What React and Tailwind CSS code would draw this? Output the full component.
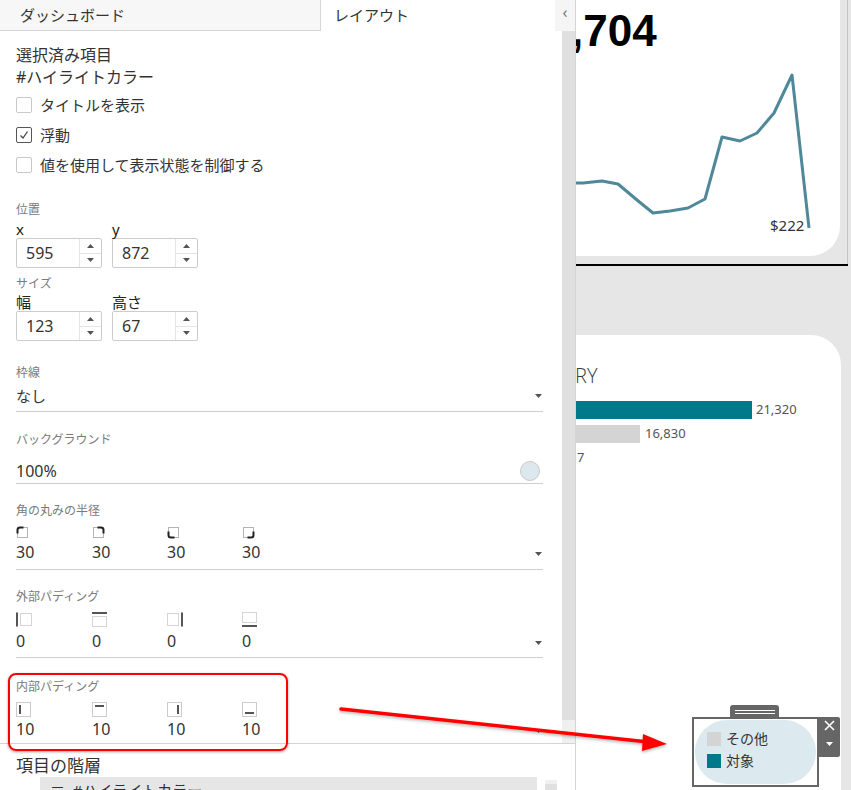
import React from "react";

const pts = [
  [-1, 123], [7, 123], [26, 121], [42, 124], [61, 140], [77, 153], [94, 151],
  [112, 148], [129, 139], [146, 77], [164, 81], [181, 73], [198, 53], [216, 15], [233, 168],
];

function Tri({ up, color = "#555" }) {
  return (
    <svg width="7" height="4" viewBox="0 0 7 4">
      <path d={up ? "M0 4 L3.5 0 L7 4 Z" : "M0 0 L7 0 L3.5 4 Z"} fill={color} />
    </svg>
  );
}

function Check({ checked, label }) {
  return (
    <div className="flex h-[30px] items-center">
      <span
        className={`flex h-4 w-4 items-center justify-center rounded-[2px] border ${
          checked ? "border-[#555]" : "border-[#c8c8c8]"
        }`}
      >
        {checked && (
          <svg width="10" height="10" viewBox="0 0 10 10">
            <path d="M1.5 5.5 L4 8 L8.5 1.5" fill="none" stroke="#444" strokeWidth="1.3" />
          </svg>
        )}
      </span>
      <span className="ml-[8px] text-[15px] text-[#333]">{label}</span>
    </div>
  );
}

function Spin({ label, value }) {
  return (
    <div>
      <div className="text-[15px] leading-[18px] text-[#222]">{label}</div>
      <div className="flex h-[30px] w-[86px] rounded-[2px] border border-[#ccc] bg-white">
        <div className="flex flex-1 items-center pl-[9px] text-[16px] text-[#333]">{value}</div>
        <div className="flex w-[22px] flex-col border-l border-[#e4e4e4]">
          <div className="flex flex-1 items-center justify-center border-b border-[#e4e4e4]">
            <Tri up />
          </div>
          <div className="flex flex-1 items-center justify-center">
            <Tri />
          </div>
        </div>
      </div>
    </div>
  );
}

function Corner({ rot }) {
  return (
    <svg width="13" height="13" viewBox="0 0 13 13">
      <rect x="1.5" y="1.5" width="10" height="10" fill="none" stroke="#666" strokeDasharray="1 1" />
      <path
        d="M1.5 7.5 V4 Q1.5 1.5 4 1.5 H7.5"
        fill="none"
        stroke="#222"
        strokeWidth="2"
        transform={`rotate(${rot} 6.5 6.5)`}
      />
    </svg>
  );
}

function OuterPad({ side }) {
  return (
    <svg width="17" height="15" viewBox="0 0 17 15">
      {side === "l" && (
        <>
          <rect x="0" y="0.5" width="2" height="14" fill="#555" />
          <rect x="4.5" y="1.5" width="11" height="12" fill="none" stroke="#aaa" strokeDasharray="1 1" />
        </>
      )}
      {side === "t" && (
        <>
          <rect x="0" y="0" width="15" height="2" fill="#555" />
          <rect x="0.5" y="4.5" width="14" height="10" fill="none" stroke="#aaa" strokeDasharray="1 1" />
        </>
      )}
      {side === "r" && (
        <>
          <rect x="0.5" y="1.5" width="11" height="12" fill="none" stroke="#aaa" strokeDasharray="1 1" />
          <rect x="14" y="0.5" width="2" height="14" fill="#555" />
        </>
      )}
      {side === "b" && (
        <>
          <rect x="0.5" y="0.5" width="14" height="10" fill="none" stroke="#aaa" strokeDasharray="1 1" />
          <rect x="0" y="13" width="15" height="2" fill="#555" />
        </>
      )}
    </svg>
  );
}

function InnerPad({ side }) {
  return (
    <svg width="15" height="15" viewBox="0 0 15 15">
      <rect x="0.5" y="0.5" width="14" height="14" fill="none" stroke="#999" strokeDasharray="1 1" />
      {side === "l" && <rect x="3" y="3" width="2" height="9" fill="#555" />}
      {side === "t" && <rect x="3" y="3" width="9" height="2" fill="#555" />}
      {side === "r" && <rect x="10" y="3" width="2" height="9" fill="#555" />}
      {side === "b" && <rect x="3" y="10" width="9" height="2" fill="#555" />}
    </svg>
  );
}

function Label({ children, className = "" }) {
  return <div className={`text-[12px] leading-[16px] text-[#7a7a7a] ${className}`}>{children}</div>;
}

export default function App() {
  const cols = ["w-[76px]", "w-[75px]", "w-[75px]", "w-[75px]"];
  return (
    <div className="relative flex h-[790px] w-[851px] overflow-hidden bg-white font-['Noto_Sans','Noto_Sans_CJK_JP',sans-serif]">
      {/* left panel */}
      <aside className="flex w-[576px] shrink-0 flex-col border-r border-[#d4d4d4] bg-white">
        <div className="flex h-[31px] shrink-0">
          <div className="flex w-[321px] items-center border-b border-r border-[#d6d6d6] bg-[#f7f7f7] pl-[20px] text-[15px] text-[#333]">
            ダッシュボード
          </div>
          <div className="flex w-[234px] items-center pl-[13px] text-[15px] text-[#333]">レイアウト</div>
          <div className="flex w-[20px] items-start justify-center bg-[#f5f5f5] pt-[3px] text-[16px] leading-[18px] text-[#777]">
            ‹
          </div>
        </div>

        <div className="flex h-[712px] shrink-0">
          <div className="flex-1 overflow-hidden pl-[16px] pr-[19px] pt-[13px]">
            <div className="text-[16px] leading-[22px] text-[#333]">選択済み項目</div>
            <div className="text-[16px] leading-[22px] text-[#333]">#ハイライトカラー</div>
            <div className="mt-[2px]">
              <Check label="タイトルを表示" />
              <Check checked label="浮動" />
              <Check label="値を使用して表示状態を制御する" />
            </div>

            <Label className="mt-[22px]">位置</Label>
            <div className="mt-[2px] flex gap-[10px]">
              <Spin label="x" value="595" />
              <Spin label="y" value="872" />
            </div>
            <Label className="mt-[8px]">サイズ</Label>
            <div className="mt-[1px] flex gap-[10px]">
              <Spin label="幅" value="123" />
              <Spin label="高さ" value="67" />
            </div>

            <div className="border-b border-[#cfcfcf] pb-[5px]">
              <Label className="mt-[24px]">枠線</Label>
              <div className="mt-[5px] flex h-[20px] items-center justify-between pr-[1px]">
                <span className="text-[15px] text-[#333]">なし</span>
                <Tri />
              </div>
            </div>

            <div className="border-b border-[#cfcfcf]">
              <Label className="mt-[20px]">バックグラウンド</Label>
              <div className="mt-[11px] flex h-[24px] items-center justify-between pr-[3px]">
                <span className="text-[16px] text-[#333]">100%</span>
                <span className="h-[20px] w-[20px] rounded-full border border-[#c9c9c9] bg-[#dde7ee]" />
              </div>
            </div>

            <div className="border-b border-[#cfcfcf] pb-[7px]">
              <Label className="mt-[19px]">角の丸みの半径</Label>
              <div className="mt-[7px] flex h-[12px] items-center">
                {[0, 90, 270, 180].map((r, i) => (
                  <div key={i} className={cols[i]}>
                    <Corner rot={r} />
                  </div>
                ))}
              </div>
              <div className="mt-[4px] flex h-[20px] items-center">
                {[0, 1, 2, 3].map((i) => (
                  <div key={i} className={`${cols[i]} text-[16px] text-[#333]`}>
                    30
                  </div>
                ))}
                <div className="ml-auto mt-[4px] pr-[1px]">
                  <Tri />
                </div>
              </div>
            </div>

            <div className="border-b border-[#cfcfcf] pb-[6px]">
              <Label className="mt-[19px]">外部パディング</Label>
              <div className="mt-[8px] flex h-[13px] items-center">
                {["l", "t", "r", "b"].map((s, i) => (
                  <div key={s} className={cols[i]}>
                    <OuterPad side={s} />
                  </div>
                ))}
              </div>
              <div className="mt-[5px] flex h-[20px] items-center">
                {[0, 1, 2, 3].map((i) => (
                  <div key={i} className={`${cols[i]} text-[16px] text-[#333]`}>
                    0
                  </div>
                ))}
                <div className="ml-auto mt-[4px] pr-[1px]">
                  <Tri />
                </div>
              </div>
            </div>

            <div>
              <Label className="mt-[21px]">内部パディング</Label>
              <div className="mt-[7px] flex h-[14px] items-center">
                {["l", "t", "r", "b"].map((s, i) => (
                  <div key={s} className={cols[i]}>
                    <InnerPad side={s} />
                  </div>
                ))}
              </div>
              <div className="mt-[3px] flex h-[20px] items-center">
                {[0, 1, 2, 3].map((i) => (
                  <div key={i} className={`${cols[i]} text-[16px] text-[#333]`}>
                    10
                  </div>
                ))}
                <div className="ml-auto mt-[4px] pr-[1px]">
                  <Tri />
                </div>
              </div>
            </div>
          </div>
          <div className="flex w-[13px] flex-col">
            <div className="flex-1 bg-[#e0e0e0]" />
            <div className="h-[23px] bg-[#f0f0f0]" />
          </div>
        </div>

        <div className="flex flex-1 overflow-hidden border-t border-[#d4d4d4]">
          <div className="flex-1 pl-[16px] pt-[11px]">
            <div className="text-[17px] leading-[22px] text-[#333]">項目の階層</div>
            <div className="ml-[24px] h-[20px] w-[497px] bg-[#e6e6e6] pl-[10px] pt-[3px] text-[15px] leading-[20px] text-[#333]">
              ≡ &nbsp;#ハイライトカラー
            </div>
          </div>
          <div className="mr-[18px] mt-[36px] flex w-[12px] flex-col">
            <div className="h-[4px] bg-[#f0f0f0]" />
            <div className="flex-1 bg-[#e0e0e0]" />
          </div>
        </div>
      </aside>

      {/* dashboard canvas */}
      <div className="flex flex-1 flex-col overflow-hidden bg-[#e6e6e6]">
        <div className="flex h-[264px] shrink-0">
          <div className="h-[256px] w-[264px] shrink-0 overflow-hidden rounded-br-[30px] bg-white">
            <div className="-ml-[5px] h-[60px] pt-[5px] font-['Liberation_Sans',sans-serif] text-[44px] font-bold leading-[52px] text-black">
              ,704
            </div>
            <svg width="264" height="196" viewBox="0 0 264 196">
              <polyline
                points={pts.map((p) => p.join(",")).join(" ")}
                fill="none"
                stroke="#4e8899"
                strokeWidth="3"
                strokeLinejoin="round"
              />
              <text x="194" y="171" fontSize="15" fill="#333" fontFamily="Noto Sans, sans-serif">
                $222
              </text>
            </svg>
          </div>
          <div className="ml-[7px] w-[1px] bg-[#bcc6cf]" />
        </div>
        <div className="h-[2px] w-[272px] shrink-0 bg-black" />
        <div className="mt-[69px] w-[265px] flex-1 rounded-tr-[30px] bg-white pt-[30px]">
          <div className="-ml-[1px] font-['Open_Sans',sans-serif] text-[20px] font-light leading-[22px] text-[#3a3a3a]">
            RY
          </div>
          <div className="mt-[14px] flex h-[18px] items-center">
            <div className="h-[18px] w-[176px] bg-[#007a8a]" />
            <span className="ml-[4px] text-[13px] text-[#555]">21,320</span>
          </div>
          <div className="mt-[6px] flex h-[18px] items-center">
            <div className="h-[18px] w-[64px] bg-[#d4d4d4]" />
            <span className="ml-[5px] text-[13px] text-[#555]">16,830</span>
          </div>
          <div className="mt-[5px] pl-[1px] text-[13px] leading-[18px] text-[#555]">7</div>
        </div>
      </div>

      {/* floating legend */}
      <div className="absolute left-[730px] top-[705px] flex h-[13px] w-[49px] flex-col items-center justify-center gap-[2px] rounded-t-[3px] bg-[#666]">
        <div className="h-[1px] w-[40px] bg-white" />
        <div className="h-[1px] w-[40px] bg-white" />
      </div>
      <div className="absolute left-[692px] top-[717px] h-[70px] w-[127px] border-2 border-[#666] bg-white p-[1px]">
        <div className="flex h-full w-full flex-col gap-[6px] rounded-[32px] bg-[#dce9ef] pl-[12px] pt-[11px]">
          <div className="flex items-center gap-[5px]">
            <span className="h-[14px] w-[14px] bg-[#d4d4d4]" />
            <span className="text-[14px] leading-[16px] text-[#333]">その他</span>
          </div>
          <div className="flex items-center gap-[5px]">
            <span className="h-[14px] w-[14px] bg-[#007a8a]" />
            <span className="text-[14px] leading-[16px] text-[#333]">対象</span>
          </div>
        </div>
      </div>
      <div className="absolute left-[819px] top-[717px] flex h-[40px] w-[21px] flex-col items-center rounded-r-[2px] bg-[#666] pt-[3px]">
        <svg width="11" height="11" viewBox="0 0 11 11">
          <path d="M1 1 L10 10 M10 1 L1 10" stroke="#fff" strokeWidth="1.6" />
        </svg>
        <div className="mt-[11px]">
          <Tri color="#fff" />
        </div>
      </div>

      {/* annotation */}
      <div className="absolute left-[8px] top-[673px] h-[78px] w-[280px] rounded-[8px] border-2 border-[#f00] shadow-[0_1px_3px_rgba(0,0,0,0.35)]" />
      <svg className="absolute left-0 top-0" width="851" height="790" viewBox="0 0 851 790">
        <defs>
          <filter id="sh" x="-10%" y="-50%" width="120%" height="200%">
            <feDropShadow dx="0" dy="1.5" stdDeviation="1.5" floodColor="#000" floodOpacity="0.3" />
          </filter>
        </defs>
        <g filter="url(#sh)">
          <line x1="341" y1="709" x2="648" y2="742" stroke="#f00" strokeWidth="3.5" strokeLinecap="round" />
          <path d="M667 744 L643 734 L642 751 Z" fill="#f00" />
        </g>
      </svg>
    </div>
  );
}
